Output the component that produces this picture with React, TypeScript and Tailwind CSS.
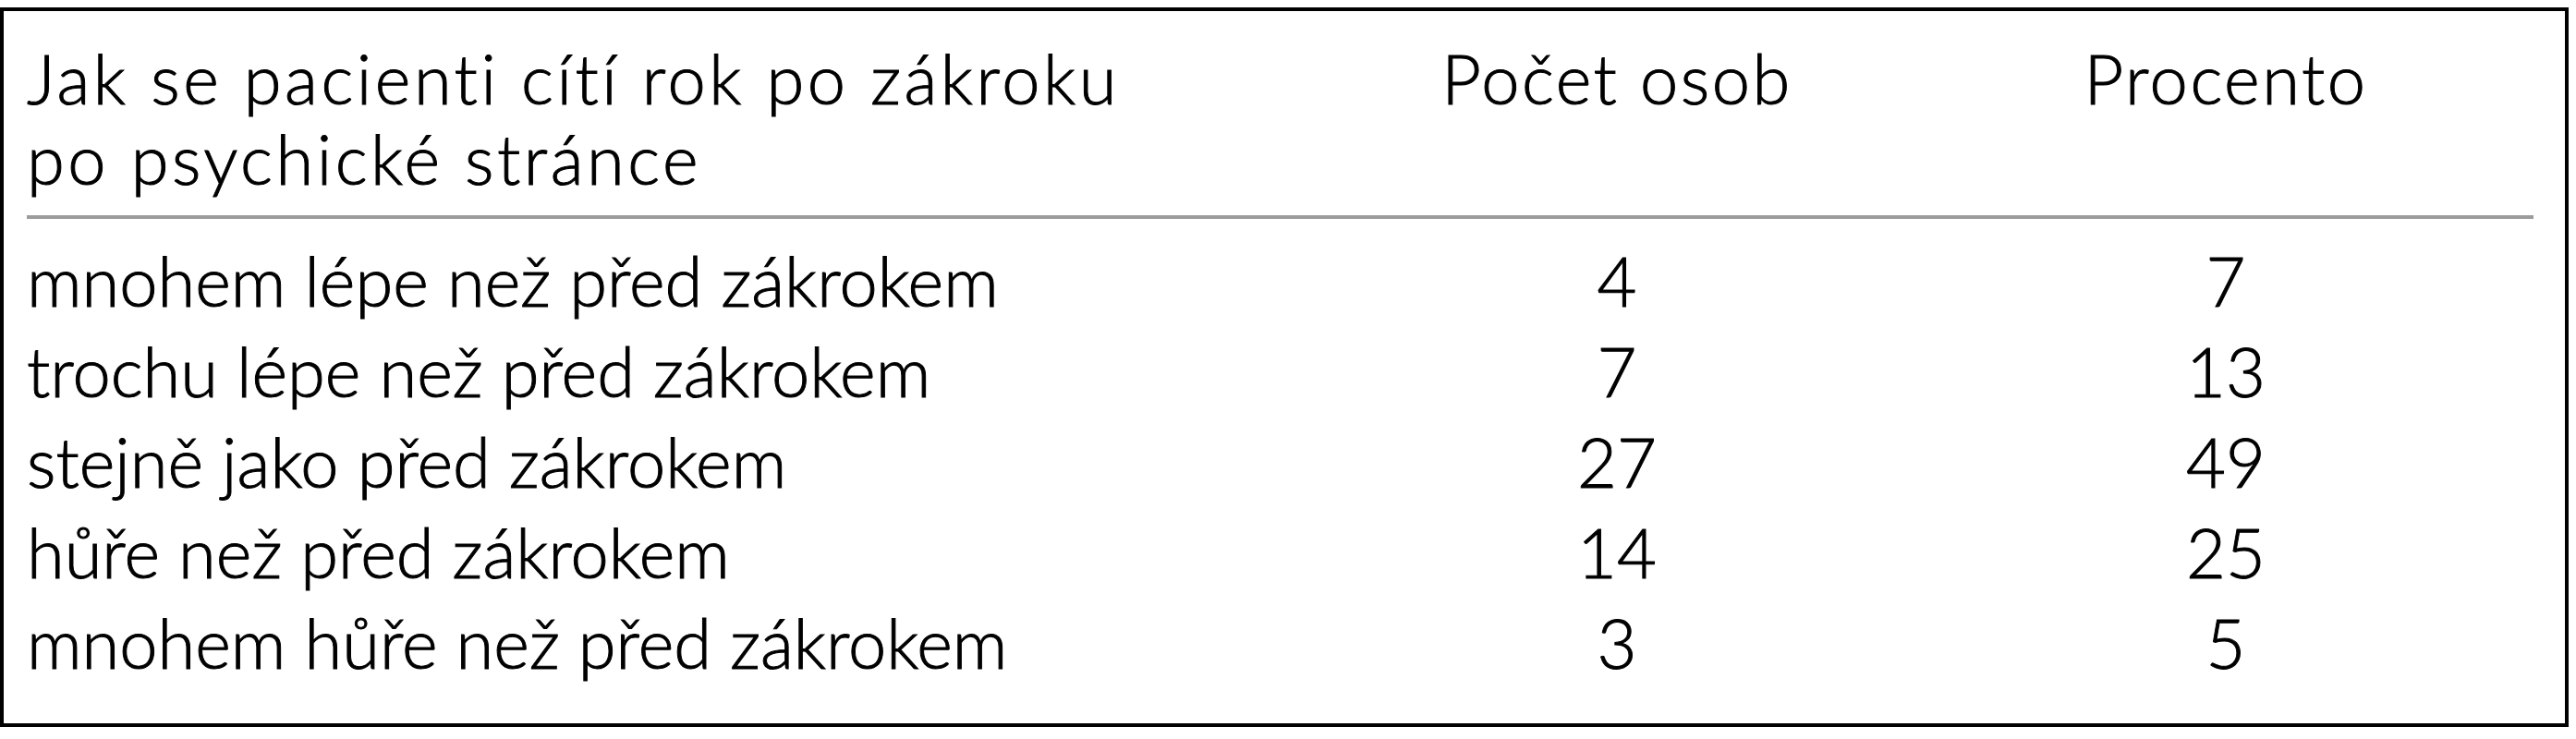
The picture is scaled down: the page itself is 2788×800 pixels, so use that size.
const rows = [
  { label: "mnohem lépe než před zákrokem", count: 4, percent: 7 },
  { label: "trochu lépe než před zákrokem", count: 7, percent: 13 },
  { label: "stejně jako před zákrokem", count: 27, percent: 49 },
  { label: "hůře než před zákrokem", count: 14, percent: 25 },
  { label: "mnohem hůře než před zákrokem", count: 3, percent: 5 },
]

export default function App() {
  return (
    <div className="min-h-screen bg-white pt-2">
      <div
        className="w-[2780px] border-4 border-black bg-white pl-[25px] pr-[34px] pt-[29px] pb-[38px] text-[74px] font-light text-black [-webkit-text-stroke:1px_black]"
        style={{ fontFamily: "Lato, 'Open Sans', sans-serif" }}
      >
        {/* header */}
        <div className="grid grid-cols-[1395px_652px_666px] leading-[87px] tracking-[2.5px]">
          <div className="tracking-[3.5px]">
            Jak se pacienti cítí rok po zákroku
            <br />
            po psychické stránce
          </div>
          <div className="text-center">Počet osob</div>
          <div className="text-center">Procento</div>
        </div>

        <div className="mt-[18px] mb-[18px] h-[4px] bg-[#9c9c9c]" />

        {/* data rows */}
        <div className="flex flex-col leading-[98px]">
          {rows.map((row) => (
            <div key={row.label} className="grid grid-cols-[1395px_652px_666px]">
              <div>{row.label}</div>
              <div className="text-center">{row.count}</div>
              <div className="text-center">{row.percent}</div>
            </div>
          ))}
        </div>
      </div>
    </div>
  )
}
